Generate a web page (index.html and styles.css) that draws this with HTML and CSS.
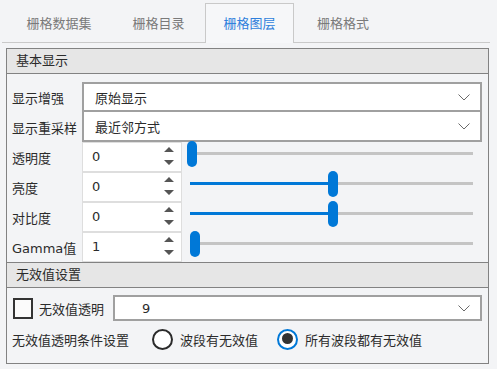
FILE: index.html
```html
<!DOCTYPE html>
<html lang="zh-CN">
    <head>
        <meta charset="UTF-8">
        <meta name="viewport" content="width=device-width, initial-scale=1.0">
        <title>栅格图层</title>
        <link rel="stylesheet" href="styles.css">
    </head>
    <body>
        <div class="tabs">
            <div class="tab tab--first">栅格数据集</div>
            <div class="tab tab--second">栅格目录</div>
            <div class="tab tab--active">栅格图层</div>
            <div class="tab tab--last">栅格格式</div>
        </div>

        <div class="group">
            <div class="group__title">基本显示</div>
            <div class="group__body">
                <div class="row">
                    <span class="row__label">显示增强</span>
                    <div class="combo">
                        <span class="combo__text">原始显示</span>
                        <svg class="combo__arrow" width="12" height="7" viewBox="0 0 12 7"><path d="M0.5 0.5 L6 6 L11.5 0.5" fill="none" stroke="#6a6a6a" stroke-width="1"/></svg>
                    </div>
                </div>
                <div class="row">
                    <span class="row__label">显示重采样</span>
                    <div class="combo combo--next">
                        <span class="combo__text">最近邻方式</span>
                        <svg class="combo__arrow" width="12" height="7" viewBox="0 0 12 7"><path d="M0.5 0.5 L6 6 L11.5 0.5" fill="none" stroke="#6a6a6a" stroke-width="1"/></svg>
                    </div>
                </div>

                <!-- spin + slider rows -->
                <div class="row">
                    <span class="row__label">透明度</span>
                    <div class="spin">
                        <span class="spin__value">0</span>
                        <svg class="spin__arrows" width="10" height="28" viewBox="0 0 10 28"><path d="M0 9 L5 4 L10 9 Z M0 17 L10 17 L5 22 Z" fill="#555"/></svg>
                    </div>
                    <div class="slider">
                        <div class="slider__groove"><div class="slider__fill" style="width:0px"></div></div>
                        <div class="slider__handle" style="left:0px"></div>
                    </div>
                </div>
                <div class="row">
                    <span class="row__label">亮度</span>
                    <div class="spin">
                        <span class="spin__value">0</span>
                        <svg class="spin__arrows" width="10" height="28" viewBox="0 0 10 28"><path d="M0 9 L5 4 L10 9 Z M0 17 L10 17 L5 22 Z" fill="#555"/></svg>
                    </div>
                    <div class="slider">
                        <div class="slider__groove"><div class="slider__fill" style="width:140px"></div></div>
                        <div class="slider__handle" style="left:141px"></div>
                    </div>
                </div>
                <div class="row">
                    <span class="row__label">对比度</span>
                    <div class="spin">
                        <span class="spin__value">0</span>
                        <svg class="spin__arrows" width="10" height="28" viewBox="0 0 10 28"><path d="M0 9 L5 4 L10 9 Z M0 17 L10 17 L5 22 Z" fill="#555"/></svg>
                    </div>
                    <div class="slider">
                        <div class="slider__groove"><div class="slider__fill" style="width:140px"></div></div>
                        <div class="slider__handle" style="left:141px"></div>
                    </div>
                </div>
                <div class="row">
                    <span class="row__label">Gamma值</span>
                    <div class="spin">
                        <span class="spin__value">1</span>
                        <svg class="spin__arrows" width="10" height="28" viewBox="0 0 10 28"><path d="M0 9 L5 4 L10 9 Z M0 17 L10 17 L5 22 Z" fill="#555"/></svg>
                    </div>
                    <div class="slider">
                        <div class="slider__groove"><div class="slider__fill" style="width:2px"></div></div>
                        <div class="slider__handle" style="left:3px"></div>
                    </div>
                </div>
            </div>

            <div class="group__title group__title--split">无效值设置</div>
            <div class="group__body group__body--nodata">
                <div class="nodata-row">
                    <span class="check"></span>
                    <span class="check__label">无效值透明</span>
                    <div class="combo combo--small">
                        <span class="combo__text combo__text--indent">9</span>
                        <svg class="combo__arrow" width="12" height="7" viewBox="0 0 12 7"><path d="M0.5 0.5 L6 6 L11.5 0.5" fill="none" stroke="#6a6a6a" stroke-width="1"/></svg>
                    </div>
                </div>
                <div class="radio-row">
                    <span class="radio-row__label">无效值透明条件设置</span>
                    <span class="radio"></span>
                    <span class="radio__label">波段有无效值</span>
                    <span class="radio radio--checked"></span>
                    <span class="radio__label radio__label--last">所有波段都有无效值</span>
                </div>
            </div>
        </div>
    </body>
</html>
```

FILE: styles.css
```css
* {
    box-sizing: border-box;
}

body {
    margin: 0;
    background: #f3f4f6;
    font-family: "DejaVu Sans", "Noto Sans CJK SC", sans-serif;
    font-size: 13px;
    color: #2b2b2b;
}

/* tab bar */
.tabs {
    display: flex;
    width: 488px;
    height: 43px;
    margin-left: 2px;
    padding-top: 3px;
    border-bottom: 1px solid #c9c9c9;
}

.tab {
    height: 39px;
    line-height: 41px;
    text-align: center;
    color: #7a7a7a;
}

.tab--first { width: 114px; }
.tab--second { width: 85px; margin-right: 4px; }
.tab--last { width: 98px; }

.tab--active {
    width: 89px;
    height: 40px;
    margin-bottom: -1px;
    background: #f6f7f9;
    border: 1px solid #c9c9c9;
    border-bottom: 0;
    color: #2f7fdc;
    line-height: 39px;
}

/* group frame */
.group {
    width: 483px;
    margin: 5px 0 0 6px;
    border: 1px solid #828282;
}

.group__title {
    height: 25px;
    padding-left: 9px;
    line-height: 24px;
    background: #e6e6e6;
    border-bottom: 1px solid #828282;
}

.group__title--split {
    height: 26px;
    border-top: 1px solid #828282;
}

.group__body {
    padding: 8px 6px 0 5px;
}

.row {
    display: flex;
    align-items: center;
    height: 30px;
}

.row__label {
    width: 70px;
    flex-shrink: 0;
}

.combo {
    flex: 1;
    display: flex;
    align-items: center;
    height: 30px;
    padding: 0 10px 0 11px;
    background: #fff;
    border: 2px solid #a0a0a0;
}

.combo--next {
    border-top-width: 0;
}

.combo__text {
    flex: 1;
}

.combo__text--indent {
    padding-left: 16px;
}

.combo__arrow {
    flex-shrink: 0;
}

/* spin box */
.spin {
    display: flex;
    align-items: flex-start;
    width: 100px;
    height: 30px;
    flex-shrink: 0;
    background: #fff;
    border: 1px solid #dedede;
}

.spin__value {
    flex: 1;
    padding-left: 9px;
    line-height: 28px;
}

.spin__arrows {
    margin-right: 7px;
}

/* slider */
.slider {
    position: relative;
    width: 289px;
    height: 26px;
    margin-left: 5px;
    align-self: flex-start;
    margin-top: -1px;
}

.slider__groove {
    position: absolute;
    left: 3px;
    right: 3px;
    top: 11px;
    height: 3px;
    background: #c4c4c4;
}

.slider__fill {
    height: 3px;
    background: #0078d7;
}

.slider__handle {
    position: absolute;
    top: 0;
    width: 10px;
    height: 26px;
    border-radius: 5px;
    background: #0078d7;
}

/* nodata section */
.group__body--nodata {
    padding: 7px 6px 12px 5px;
}

.nodata-row {
    display: flex;
    align-items: center;
    height: 26px;
}

.check {
    flex-shrink: 0;
    width: 20px;
    height: 21px;
    margin-left: 1px;
    border: 2px solid #333;
    background: #fbfbfb;
}

.check__label {
    flex-shrink: 0;
    width: 80px;
    padding-left: 6px;
}

.combo--small {
    height: 26px;
}

.radio-row {
    display: flex;
    align-items: center;
    height: 24px;
    margin-top: 6px;
}

.radio-row__label {
    flex-shrink: 0;
    width: 140px;
}

.radio {
    position: relative;
    flex-shrink: 0;
    width: 21px;
    height: 21px;
    border-radius: 50%;
    border: 2px solid #2b2b2b;
    background: #fff;
}

.radio--checked {
    border: 2.5px solid #0078d7;
}

.radio--checked::after {
    content: "";
    position: absolute;
    left: 2.5px;
    top: 2.5px;
    width: 11px;
    height: 11px;
    border-radius: 50%;
    background: #333;
}

.radio__label {
    flex-shrink: 0;
    width: 104px;
    padding-left: 7px;
}

.radio__label--last {
    width: auto;
}
```
